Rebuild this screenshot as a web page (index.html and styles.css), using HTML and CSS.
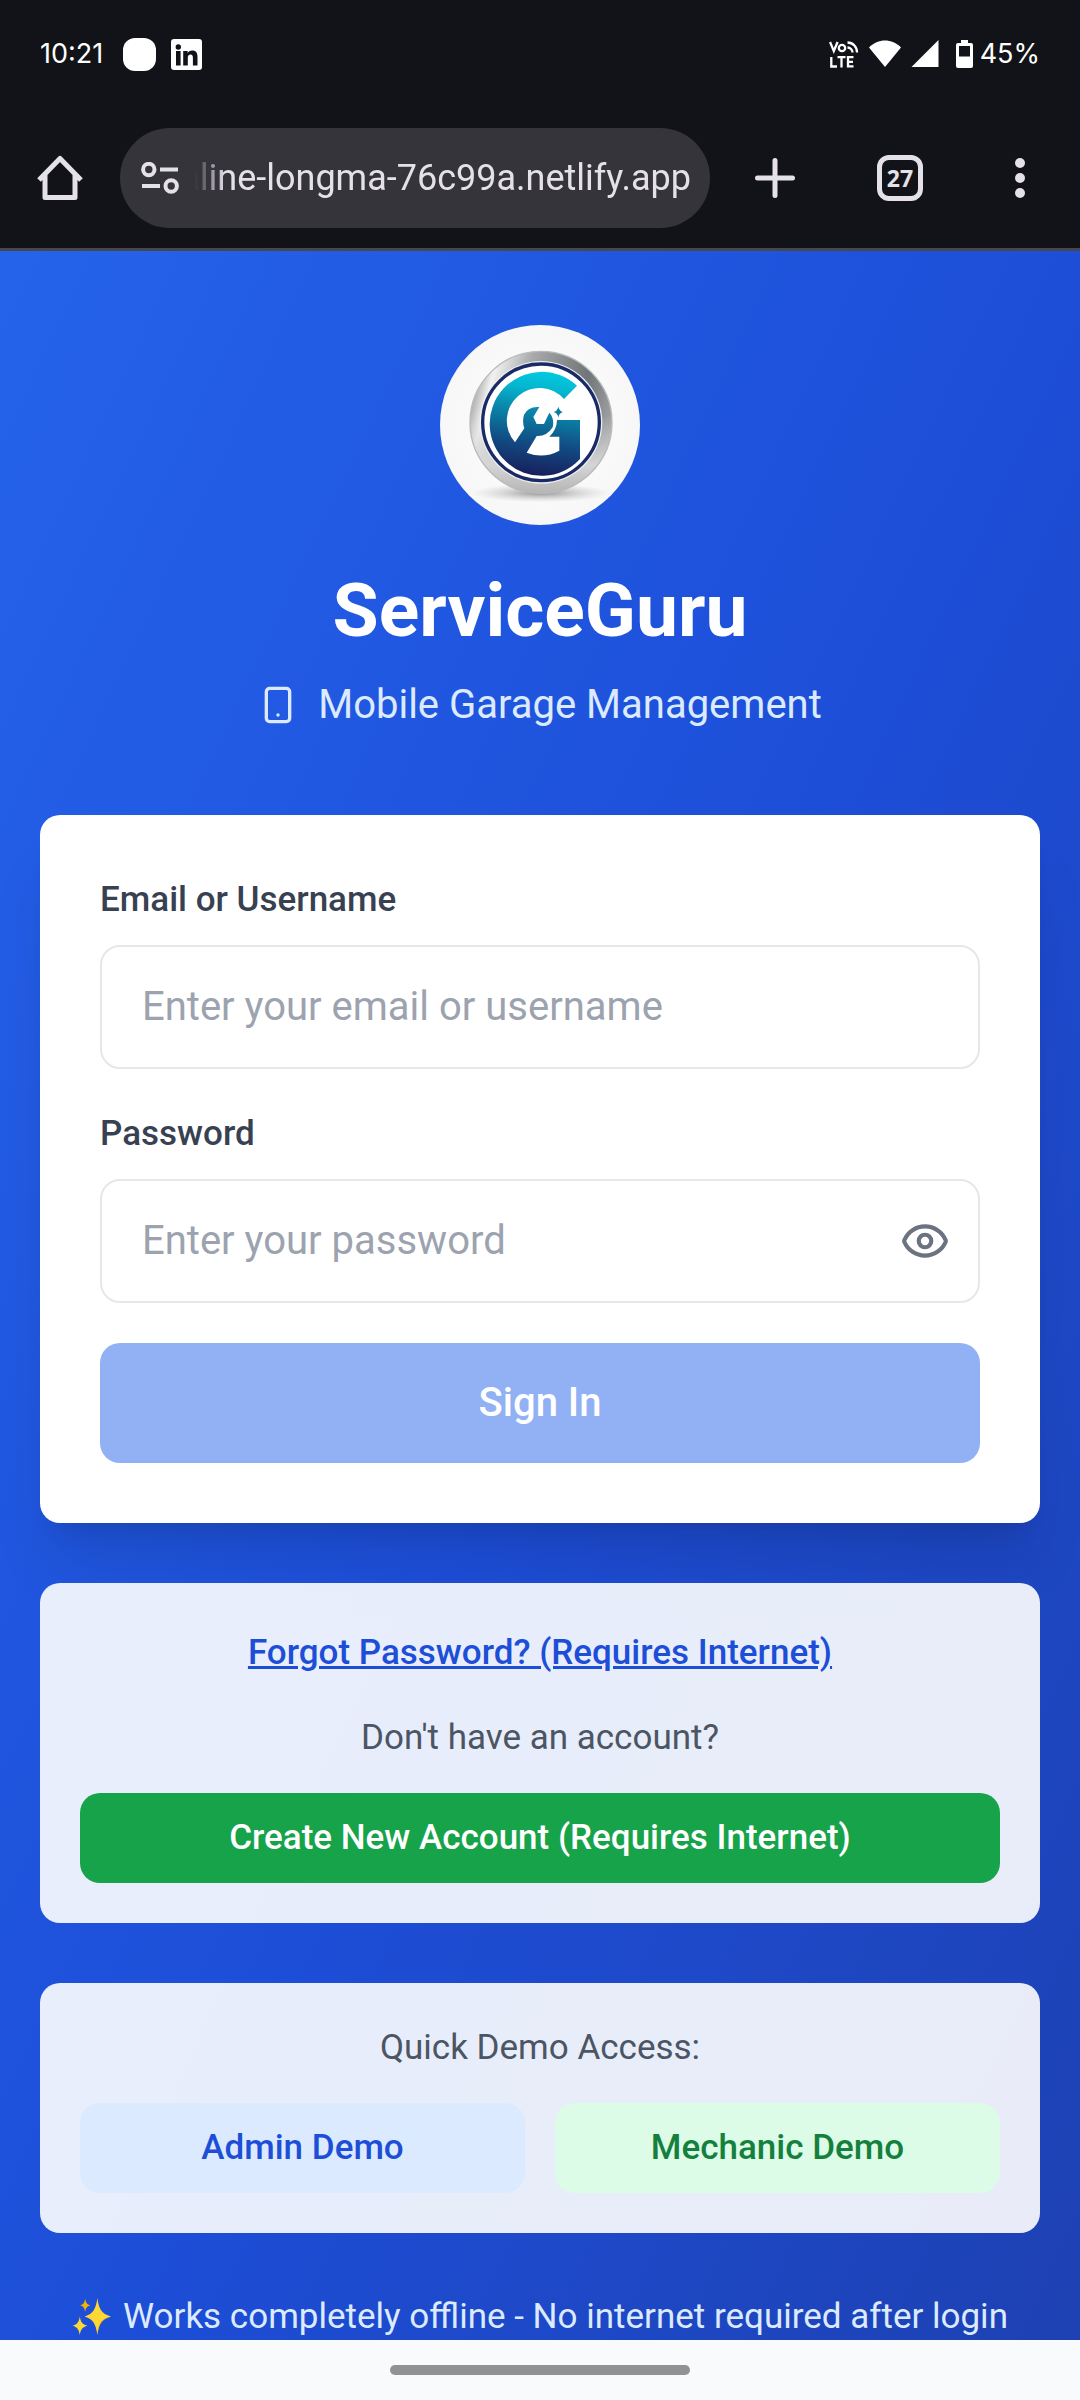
FILE: index.html
```html
<!DOCTYPE html>
<html lang="en">
<head>
<meta charset="utf-8">
<meta name="viewport" content="width=device-width, initial-scale=1">
<title>ServiceGuru</title>
<link rel="stylesheet" href="styles.css">
</head>
<body>
<header class="chrome">
  <div class="status">
    <div class="status-group">
      <span class="status-text">10:21</span>
      <span class="blob"></span>
      <svg class="linkedin" viewBox="0 0 31 31" aria-hidden="true">
        <rect width="31" height="31" rx="3" fill="#fff"/>
        <g fill="#121318"><circle cx="7.300" cy="8" r="2.700"/><path d="M5 12h4.600v14.500H5zM12.200 12h4.400v2c.8-1.400 2.400-2.400 4.500-2.400 4.200 0 5.400 2.700 5.400 6.600v8.300h-4.600V19c0-2-.5-3.500-2.400-3.500s-2.700 1.400-2.700 3.500v7.500h-4.600z"/></g>
      </svg>
    </div>
    <div class="status-group status-right">
      <svg class="volte" viewBox="0 0 30 28" fill="none" stroke="#fff" stroke-width="2.300" aria-hidden="true">
        <path d="M1 2l3.800 9L8.600 2M2.300 17v9.500H8M8.500 17.200h8M12.500 17.200V27.500M24.500 17.200H19v9.200h5.500M19 21.800h5"/>
        <circle cx="13" cy="8" r="3.200"/>
        <path d="M18.500 7.500a5 5 0 0 1 5 5M18.500 2.500a9.500 9.500 0 0 1 9.500 10"/>
      </svg>
      <svg class="wifi" viewBox="0 0 32 28" aria-hidden="true"><path d="M0 7.500C9-1.800 23-1.800 32 7.500L16 27z" fill="#fff"/></svg>
      <svg class="signal" viewBox="0 0 28 28" aria-hidden="true"><path d="M27.500 0v27H.5z" fill="#fff"/></svg>
      <svg class="battery" viewBox="0 0 17 28" aria-hidden="true"><path fill="#fff" fill-rule="evenodd" d="M5 0h7v3h3q2 0 2 2v21q0 2-2 2H2q-2 0-2-2V5q0-2 2-2h3zM3 6v10.500h11V6z"/></svg>
      <span class="status-text">45%</span>
    </div>
  </div>
  <div class="toolbar">
    <button class="tool" type="button" aria-label="Home">
      <svg viewBox="0 0 48 48" fill="none" stroke="#e5e1e8" stroke-width="5" stroke-linejoin="round" aria-hidden="true"><path d="M3 26 24 4.500 45 26M9 21v22.500h30V21"/></svg>
    </button>
    <div class="omnibox">
      <svg class="tune" viewBox="0 0 38 32" fill="none" stroke="#e5e1e8" stroke-width="4" aria-hidden="true"><circle cx="7.800" cy="7.500" r="5.700"/><path d="M19 7.500h18M1 24h18"/><circle cx="30.200" cy="24" r="5.700"/></svg>
      <input class="url" type="text" aria-label="Address" value="aline-longma-76c99a.netlify.app">
    </div>
    <button class="tool new-tab" type="button" aria-label="New tab">
      <svg viewBox="0 0 48 48" stroke="#e5e1e8" stroke-width="5" stroke-linecap="round" aria-hidden="true"><path d="M24 6.500v35M6.500 24h35"/></svg>
    </button>
    <button class="tool" type="button" aria-label="Switch tabs"><span class="tab-count">27</span></button>
    <button class="tool" type="button" aria-label="Menu">
      <svg viewBox="0 0 48 48" fill="#e5e1e8" aria-hidden="true"><circle cx="24" cy="9" r="5"/><circle cx="24" cy="24" r="5"/><circle cx="24" cy="39" r="5"/></svg>
    </button>
  </div>
</header>

<main class="page">
  <svg class="logo" viewBox="60 45 600 600" role="img" aria-label="ServiceGuru logo">
    <defs>
      <radialGradient id="plate"><stop offset="0" stop-color="#fff"/><stop offset="1" stop-color="#f7f7f7"/></radialGradient>
      <linearGradient id="metal" x1="0" y1=".3" x2="1" y2=".55"><stop offset="0" stop-color="#999"/><stop offset=".12" stop-color="#f2f2f2"/><stop offset=".35" stop-color="#a8aaab"/><stop offset=".75" stop-color="#6f7578"/><stop offset="1" stop-color="#a4a6a7"/></linearGradient>
      <linearGradient id="shine" x1="0" y1="0" x2="0" y2="1"><stop offset=".45" stop-color="#d5d5d5" stop-opacity="0"/><stop offset=".8" stop-color="#d5d5d5"/><stop offset="1" stop-color="#b5b5b5"/></linearGradient>
      <linearGradient id="teal" gradientUnits="userSpaceOnUse" x1="380" y1="190" x2="340" y2="494"><stop offset="0" stop-color="#02c8de"/><stop offset=".16" stop-color="#06b6cf"/><stop offset=".4" stop-color="#0a82a8"/><stop offset=".7" stop-color="#124a82"/><stop offset="1" stop-color="#17205c"/></linearGradient>
      <radialGradient id="shade"><stop offset="0" stop-color="#777" stop-opacity=".8"/><stop offset="1" stop-color="#bbb" stop-opacity="0"/></radialGradient>
    </defs>
    <circle cx="360" cy="345" r="300" fill="url(#plate)"/>
    <ellipse cx="363" cy="549" rx="210" ry="28" fill="url(#shade)"/>
    <circle cx="363" cy="337" r="213" fill="url(#metal)"/>
    <circle cx="363" cy="337" r="213" fill="url(#shine)" stroke="#b9babb" stroke-width="4"/>
    <circle cx="363" cy="337" r="184" fill="#ededed"/>
    <circle cx="363" cy="337" r="175" fill="#fff" stroke="#192b66" stroke-width="10"/>
    <path fill="url(#teal)" d="M471 227A156 156 0 1 0 480 447V330H411Q410 360 388 380H418V422Q370 448 320 428L350 378Q380 380 398 352Q404 325 388 308L372 342H350L340 321L358 291Q325 288 312 314Q306 335 313 355L285 397A98 98 0 0 1 432 267Z"/>
    <path d="M415 290q3 13 14 16-11 3-14 16-3-13-14-16 11-3 14-16z" fill="#087e9f"/>
  </svg>
  <h1 class="title">ServiceGuru</h1>
  <p class="tagline">
    <svg class="phone" viewBox="0 0 24 24" fill="none" stroke="currentColor" stroke-width="2" stroke-linecap="round" stroke-linejoin="round" aria-hidden="true"><rect x="5" y="2" width="14" height="20" rx="2"/><path d="M12 18h.01"/></svg>
    <span>Mobile Garage Management</span>
  </p>

  <form class="card login">
    <div class="field">
      <label for="user">Email or Username</label>
      <input class="box" id="user" type="text" placeholder="Enter your email or username">
    </div>
    <div class="field">
      <label for="password">Password</label>
      <div class="password">
        <input class="box" id="password" type="password" placeholder="Enter your password">
        <button class="reveal" type="button" aria-label="Show password">
          <svg viewBox="0 0 24 24" fill="none" stroke="currentColor" stroke-width="2" stroke-linecap="round" stroke-linejoin="round" aria-hidden="true"><path d="M2.062 12.348a1 1 0 0 1 0-.696 10.750 10.750 0 0 1 19.876 0 1 1 0 0 1 0 .696 10.750 10.750 0 0 1-19.876 0"/><circle cx="12" cy="12" r="3"/></svg>
        </button>
      </div>
    </div>
    <button class="signin" type="submit" disabled>Sign In</button>
  </form>

  <section class="card panel">
    <p class="forgot"><a href="#forgot">Forgot Password? (Requires Internet)</a></p>
    <p class="note">Don't have an account?</p>
    <button class="action create" type="button">Create New Account (Requires Internet)</button>
  </section>

  <section class="card panel">
    <p class="note">Quick Demo Access:</p>
    <div class="demos">
      <button class="action admin" type="button">Admin Demo</button>
      <button class="action mechanic" type="button">Mechanic Demo</button>
    </div>
  </section>

  <p class="offline">
    <svg class="sparkles" viewBox="0 0 40 40" aria-hidden="true">
      <path d="M26 1c1.500 11 4 16 14 19-10 3-12.500 8-14 19-1.500-11-4-16-13-19 9-3 11.500-8 13-19z" fill="#fdd835"/>
      <path d="M26 39c1.500-11 4-16 14-19-10 2-13 5-14 19z" fill="#f4b400" opacity=".6"/>
      <path d="M8 20c1 6 2.500 8 8 9.500-5.500 1.500-7 3.500-8 9.500-1-6-2.500-8-7.500-9.500C5.500 28 7 26 8 20z" fill="#fdd835"/>
      <path d="M13.500 1.500c.7 4.500 1.800 6 5.500 7-3.700 1-4.800 2.500-5.500 7-.7-4.500-1.800-6-5.200-7 3.400-1 4.500-2.500 5.200-7z" fill="#f4b400"/>
    </svg>
    <span>Works completely offline - No internet required after login</span>
  </p>
</main>

<footer class="gesture"><span class="handle"></span></footer>
</body>
</html>
```
FILE: styles.css
```css
* {
  box-sizing: border-box;
}

body {
  margin: 0;
  min-height: 100vh;
  display: flex;
  flex-direction: column;
  font-family: Roboto, sans-serif;
  font-size: 40px;
  line-height: 60px;
}

h1,
p {
  margin: 0;
}

button,
input {
  font: inherit;
  border: 0;
  margin: 0;
  padding: 0;
  background: none;
}

svg {
  display: block;
  flex-shrink: 0;
}

/* Phone status bar and browser toolbar */
.chrome {
  background: #121318;
  border-bottom: 3px solid #48474b;
  color: #fff;
}

.status {
  display: flex;
  justify-content: space-between;
  align-items: center;
  height: 108px;
  padding: 0 40px;
}

.status-group {
  display: flex;
  align-items: center;
}

.status-text {
  font-family: Inter, sans-serif;
  font-size: 27px;
  line-height: 40px;
}

.blob {
  width: 33px;
  height: 33px;
  margin: 0 15px 0 20px;
  border-radius: 12px;
  background: #fff;
}

.linkedin {
  width: 31px;
  height: 31px;
}

.volte {
  width: 30px;
  height: 28px;
  margin-right: 10px;
}

.wifi {
  width: 32px;
  height: 28px;
  margin-right: 10px;
}

.signal {
  width: 28px;
  height: 28px;
  margin-right: 17px;
}

.battery {
  width: 17px;
  height: 28px;
  margin-right: 7px;
}

.toolbar {
  display: flex;
  align-items: center;
  height: 140px;
}

.tool {
  width: 120px;
  height: 120px;
  display: flex;
  align-items: center;
  justify-content: center;
}

.tool svg {
  width: 48px;
  height: 48px;
}

.new-tab {
  width: 130px;
}

.omnibox {
  flex: 1;
  min-width: 0;
  height: 100px;
  border-radius: 50px;
  background: #36343b;
  display: flex;
  align-items: center;
  padding: 0 19px 0 21px;
}

.tune {
  width: 38px;
  height: 32px;
}

.url {
  flex: 1;
  min-width: 0;
  height: 60px;
  color: #e5e1e8;
  font-family: Roboto, sans-serif;
  font-size: 36px;
  text-align: right;
  mask-image: linear-gradient(to right, transparent 16px, #000 46px);
}

.tab-count {
  width: 46px;
  height: 46px;
  border: 5px solid #e5e1e8;
  border-radius: 12px;
  color: #e5e1e8;
  font-family: "Open Sans", sans-serif;
  font-size: 23px;
  font-weight: 700;
  line-height: 36px;
  text-align: center;
}

/* Sign-in page; the gradient runs on past the fold */
.page {
  flex: 1;
  display: flex;
  flex-direction: column;
  padding: 74px 40px 0;
  background: linear-gradient(to bottom right, #2563eb, #1d4ed8 50%, #1e40af) no-repeat;
  background-size: 100% 110%;
}

.logo {
  width: 200px;
  height: 200px;
  margin: 0 auto 40px;
}

.title {
  margin-bottom: 20px;
  color: #fff;
  font-size: 75px;
  font-weight: 700;
  line-height: 90px;
  text-align: center;
}

.tagline {
  display: flex;
  align-items: center;
  justify-content: center;
  gap: 20px;
  margin-bottom: 80px;
  color: #dbeafe;
}

.phone {
  width: 40px;
  height: 40px;
}

.card {
  margin-bottom: 60px;
  border-radius: 20px;
}

.login {
  display: flex;
  flex-direction: column;
  gap: 40px;
  padding: 60px;
  background: #fff;
  box-shadow: 0 50px 62px -12px rgba(0, 0, 0, .1), 0 20px 25px -15px rgba(0, 0, 0, .1);
}

.field {
  display: flex;
  flex-direction: column;
  gap: 20px;
}

.field label {
  color: #374151;
  font-size: 35px;
  font-weight: 500;
  line-height: 50px;
}

.box {
  width: 100%;
  height: 124px;
  padding: 0 40px 2px;
  border: 2px solid #e5e7eb;
  border-radius: 20px;
  background: #fff;
  color: #374151;
}

.box::placeholder {
  color: #9ca3af;
  opacity: 1;
}

.password {
  display: flex;
  position: relative;
}

.password .box {
  padding-right: 110px;
}

.reveal {
  position: absolute;
  top: 0;
  right: 30px;
  bottom: 0;
  display: flex;
  align-items: center;
  color: #6b7280;
}

.reveal svg {
  width: 50px;
  height: 50px;
}

.signin {
  height: 120px;
  border-radius: 20px;
  background: #92b1f5;
  color: #fff;
  font-weight: 500;
}

.panel {
  display: flex;
  flex-direction: column;
  gap: 30px;
  padding: 40px;
  background: rgba(255, 255, 255, .9);
  text-align: center;
}

.forgot {
  font-size: 35px;
  font-weight: 500;
}

.forgot a {
  color: #1d4ed8;
  text-decoration: underline;
}

.note {
  color: #4b5563;
  font-size: 35px;
  line-height: 50px;
}

.action {
  height: 90px;
  border-radius: 20px;
  font-size: 35px;
  font-weight: 500;
  line-height: 50px;
}

.create {
  background: #16a34a;
  color: #fff;
}

.demos {
  display: grid;
  grid-template-columns: 1fr 1fr;
  gap: 30px;
}

.admin {
  background: #dbeafe;
  color: #1d4ed8;
}

.mechanic {
  background: #dcfce7;
  color: #15803d;
}

.offline {
  display: flex;
  align-items: center;
  justify-content: center;
  gap: 12px;
  color: #dbeafe;
  font-size: 35px;
  line-height: 47px;
}

.sparkles {
  width: 39px;
  height: 39px;
}

/* System gesture bar */
.gesture {
  display: flex;
  align-items: center;
  justify-content: center;
  height: 60px;
  background: #f9fafb;
}

.handle {
  width: 300px;
  height: 10px;
  border-radius: 5px;
  background: #929292;
}
```
